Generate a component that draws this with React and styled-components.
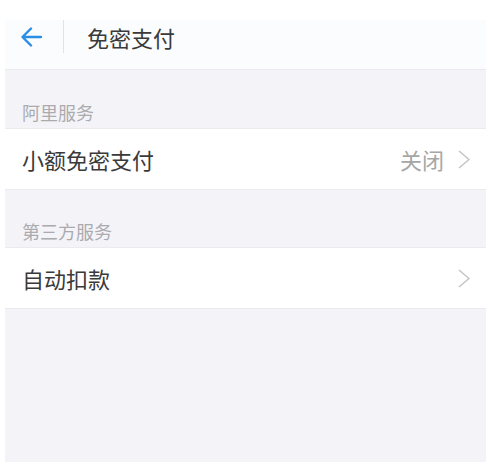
import styled, { createGlobalStyle } from 'styled-components'

const GlobalStyle = createGlobalStyle`
  html, body {
    margin: 0;
    padding: 0;
    background: #ffffff;
  }
  body {
    font-family: "Noto Sans CJK SC", "Noto Sans", sans-serif;
  }
`

const Page = styled.div`
  margin-left: 5px;
  height: 462px;
  display: flex;
  flex-direction: column;
  background: #f4f4f8;
  overflow: hidden;
`

const Header = styled.header`
  padding-top: 20px;
  background: #ffffff;
`

const Bar = styled.div`
  height: 49px;
  display: flex;
  align-items: flex-start;
  background: #fbfcfd;
  border-bottom: 1px solid #e9e9ee;
`

const Back = styled.button`
  border: 0;
  background: none;
  padding: 0;
  margin: 5px 0 0 14px;
  width: 24px;
  height: 24px;
  display: flex;
  align-items: center;
  justify-content: center;
  cursor: pointer;
`

const Divider = styled.span`
  width: 1px;
  height: 33px;
  background: #e3e3e6;
  margin-left: 20px;
`

const Title = styled.h1`
  margin: 6px 0 0 23px;
  font-size: 22px;
  font-weight: 400;
  color: #3a3a3a;
  line-height: 1;
`

const SectionLabel = styled.div`
  height: ${p => p.$h}px;
  box-sizing: border-box;
  display: flex;
  align-items: flex-end;
  padding: 0 0 7px 17px;
  font-size: 18px;
  color: #ababaf;
  line-height: 1;
`

const Row = styled.div`
  height: 62px;
  box-sizing: border-box;
  display: flex;
  align-items: center;
  padding: 0 16px 0 17px;
  background: #ffffff;
  border-top: 1px solid #ebebef;
  border-bottom: 1px solid #ebebef;
`

const RowTitle = styled.span`
  flex: 1;
  font-size: 22px;
  color: #3a3a3a;
  line-height: 1;
`

const RowValue = styled.span`
  font-size: 22px;
  color: #a6a6a6;
  line-height: 1;
  margin-right: 14px;
`

const Chevron = () => (
  <svg width="12" height="19" viewBox="0 0 12 19" fill="none">
    <path d="M1 1l10 8.5L1 18" stroke="#c2c2c6" strokeWidth="1.4" />
  </svg>
)

const ArrowLeft = () => (
  <svg width="22" height="22" viewBox="0 0 22 22" fill="none">
    <path d="M21 11H3M11 2.5L2.5 11l8.5 8.5" stroke="#2a8ee6" strokeWidth="2.4" strokeLinecap="round" strokeLinejoin="round" />
  </svg>
)

const App = () => {
  return (
    <>
      <GlobalStyle />
      <Page>
        <Header>
          <Bar>
            <Back aria-label="返回"><ArrowLeft /></Back>
            <Divider />
            <Title>免密支付</Title>
          </Bar>
        </Header>
        <SectionLabel $h={58}>阿里服务</SectionLabel>
        <Row>
          <RowTitle>小额免密支付</RowTitle>
          <RowValue>关闭</RowValue>
          <Chevron />
        </Row>
        <SectionLabel $h={57}>第三方服务</SectionLabel>
        <Row>
          <RowTitle>自动扣款</RowTitle>
          <Chevron />
        </Row>
      </Page>
    </>
  )
}

export default App
